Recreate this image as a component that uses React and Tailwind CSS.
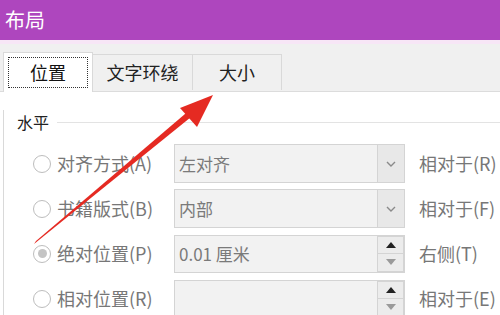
import React from "react";

const font = { fontFamily: '"Noto Sans CJK SC", "Noto Sans", sans-serif' };

function Radio({ checked }) {
  return (
    <div className="w-[18px] h-[18px] rounded-full border border-[#bdbdbd] bg-white flex items-center justify-center shrink-0">
      {checked && <div className="w-[9px] h-[9px] rounded-full bg-[#c4c4c4]" />}
    </div>
  );
}

function Combo({ text }) {
  return (
    <div className="w-[231px] h-[39px] border border-[#d4d4d4] bg-[#f2f2f2] flex shrink-0">
      <div className="flex-1 flex items-center pl-[4px] text-[17px] text-[#7a7a7a]">{text}</div>
      <div className="w-[27px] h-full border-l border-[#d4d4d4] bg-[#e8e8e8] flex items-center justify-center">
        <svg width="10" height="6" viewBox="0 0 10 6">
          <path d="M1 1 L5 5 L9 1" fill="none" stroke="#8a8a8a" strokeWidth="1.4" />
        </svg>
      </div>
    </div>
  );
}

function Spin({ text }) {
  return (
    <div className="w-[231px] h-[38px] border border-[#d4d4d4] bg-[#f2f2f2] flex shrink-0">
      <div className="flex-1 flex items-center pl-[4px] text-[17px] text-[#7a7a7a]">{text}</div>
      <div className="w-[27px] h-full flex flex-col">
        <div className="flex-1 border border-[#d4d4d4] bg-[#ececec] flex items-center justify-center">
          <svg width="10" height="6" viewBox="0 0 10 6">
            <path d="M0 6 L5 0 L10 6 Z" fill="#222" />
          </svg>
        </div>
        <div className="flex-1 border border-t-0 border-[#d4d4d4] bg-[#ececec] flex items-center justify-center">
          <svg width="10" height="6" viewBox="0 0 10 6">
            <path d="M0 0 L5 6 L10 0 Z" fill="#9a9a9a" />
          </svg>
        </div>
      </div>
    </div>
  );
}

function Row({ label, checked, control, right }) {
  return (
    <div className="flex items-center h-[39px]">
      <div className="w-[29px]" />
      <Radio checked={checked} />
      <div className="w-[123px] pl-[6px] text-[18px] text-[#777] whitespace-nowrap">{label}</div>
      {control}
      <div className="pl-[14px] text-[18px] text-[#777] whitespace-nowrap">{right}</div>
    </div>
  );
}

export default function App() {
  return (
    <div className="relative w-[500px] h-[315px] overflow-hidden bg-white" style={font}>
      <div className="h-[40px] bg-[#ae46be] flex items-center pl-[5px] text-white text-[20px]">布局</div>
      <div className="h-[4px] bg-[#f7e6f6]" />
      <div className="h-[48px] bg-[#f0f0f0] flex items-end pl-[3px] border-b border-[#dcdcdc]">
        <div className="w-[90px] h-[40px] bg-white border border-b-0 border-[#d9d9d9] -mb-[1px] flex items-center justify-center p-[4px]">
          <div className="w-full h-full border border-dotted border-[#333] flex items-center justify-center text-[18px] text-[#111]">
            位置
          </div>
        </div>
        <div className="w-[100px] h-[36px] mb-[1px] border-t border-r border-[#d9d9d9] flex items-center justify-center text-[18px] text-[#222]">
          文字环绕
        </div>
        <div className="w-[89px] h-[36px] mb-[1px] border-t border-r border-[#d9d9d9] flex items-center justify-center text-[18px] text-[#222]">
          大小
        </div>
      </div>
      <div className="ml-[3px] border-l border-[#d9d9d9] h-[223px]">
        <div className="flex items-center h-[24px] mt-[18px] pl-[13px]">
          <div className="text-[16px] text-[#222]">水平</div>
          <div className="flex-1 ml-[8px] h-px bg-[#e3e3e3]" />
        </div>
        <div className="mt-[10px] flex flex-col gap-[6px]">
          <Row label="对齐方式(A)" control={<Combo text="左对齐" />} right="相对于(R)" />
          <Row label="书籍版式(B)" control={<Combo text="内部" />} right="相对于(F)" />
          <Row label="绝对位置(P)" checked control={<Spin text="0.01 厘米" />} right="右侧(T)" />
          <Row label="相对位置(R)" control={<Spin text="" />} right="相对于(E)" />
        </div>
      </div>
      <svg className="absolute left-0 top-0 pointer-events-none" width="500" height="315" viewBox="0 0 500 315">
        <path d="M34 244 L36 241 L192 108 L196 113 Z" fill="#e52a22" />
        <path d="M213 95 L180 108 L197 127 Z" fill="#e52a22" />
      </svg>
    </div>
  );
}
